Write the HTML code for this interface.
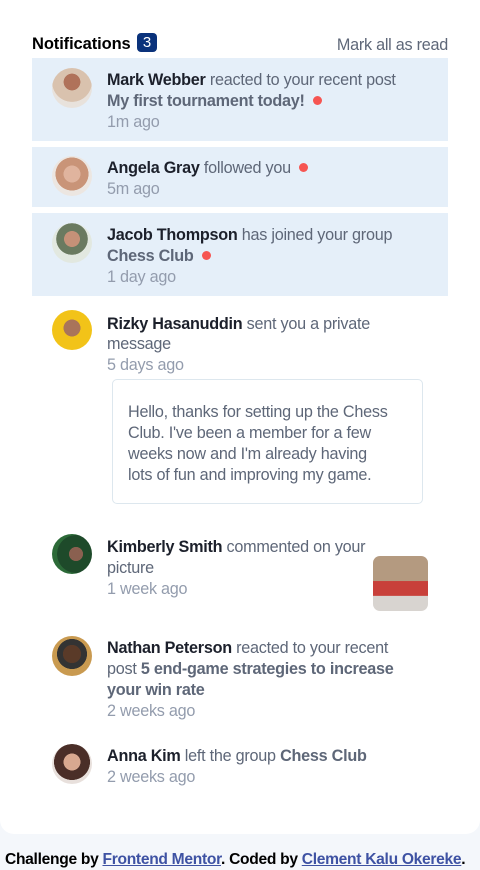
<!DOCTYPE html>
<html><head><meta charset="utf-8"><style>
*{margin:0;padding:0;box-sizing:border-box}
body{width:480px;height:868px;background:#f4f7fb;font-family:"Liberation Sans",sans-serif;position:relative;overflow:hidden;color:#5e6778}
.card{position:absolute;left:0;top:0;width:480px;height:834px;background:#fff;border-radius:0 0 14px 14px}
.a{position:absolute;white-space:nowrap;font-size:16.2px;letter-spacing:-0.25px;line-height:20px}
b{color:#1c202b;font-weight:bold}
b.g{color:#5e6778}
.t{color:#939cad}
.row{position:absolute;left:32px;width:416px;background:#e5eff9}
.av{position:absolute;left:52px;width:40px;height:40px;border-radius:50%}
.dot{display:inline-block;width:9px;height:9px;border-radius:50%;background:#f65552;margin-left:8px;vertical-align:1px}
</style></head><body>
<div class="card"></div>
<div class="a" style="left:32px;top:34px;font-weight:bold;color:#000;font-size:16.5px;letter-spacing:-0.1px">Notifications</div>
<div style="position:absolute;left:137px;top:33px;width:20px;height:19px;background:#0a327b;border-radius:4px;color:#fff;font-size:15px;text-align:center;line-height:19px">3</div>
<div class="a" style="right:32px;top:35px">Mark all as read</div>

<div class="row" style="top:58px;height:83px"></div>
<div class="row" style="top:147px;height:60px"></div>
<div class="row" style="top:213px;height:83px"></div>

<div class="av" style="top:68px;background:radial-gradient(circle at 50% 35%,#b0725a 0 25%,#d9c2ae 26% 60%,#e8e2dc 61%)"></div>
<div class="a" style="left:107px;top:70px"><b>Mark Webber</b> reacted to your recent post</div>
<div class="a" style="left:107px;top:91px"><b class="g">My first tournament today!</b><span class="dot"></span></div>
<div class="a t" style="left:107px;top:112px">1m ago</div>

<div class="av" style="top:156px;background:radial-gradient(circle at 50% 45%,#e0b49e 0 28%,#c99478 29% 55%,#ece6e1 56%)"></div>
<div class="a" style="left:107px;top:158px"><b>Angela Gray</b> followed you<span class="dot"></span></div>
<div class="a t" style="left:107px;top:179px">5m ago</div>

<div class="av" style="top:223px;background:radial-gradient(circle at 50% 40%,#c59178 0 25%,#6a7a60 26% 50%,#e2e8e0 51%)"></div>
<div class="a" style="left:107px;top:225px"><b>Jacob Thompson</b> has joined your group</div>
<div class="a" style="left:107px;top:246px"><b class="g">Chess Club</b><span class="dot"></span></div>
<div class="a t" style="left:107px;top:267px">1 day ago</div>

<div class="av" style="top:310px;background:radial-gradient(circle at 50% 45%,#a9745a 0 28%,#f2c318 29%)"></div>
<div class="a" style="left:107px;top:314px"><b>Rizky Hasanuddin</b> sent you a private</div>
<div class="a" style="left:107px;top:334px">message</div>
<div class="a t" style="left:107px;top:355px">5 days ago</div>
<div style="position:absolute;left:112px;top:379px;width:311px;height:125px;border:1px solid #dde7ee;border-radius:5px"></div>
<div class="a" style="left:128px;top:402px">Hello, thanks for setting up the Chess</div>
<div class="a" style="left:128px;top:423px">Club. I've been a member for a few</div>
<div class="a" style="left:128px;top:444px">weeks now and I'm already having</div>
<div class="a" style="left:128px;top:465px">lots of fun and improving my game.</div>

<div class="av" style="top:534px;background:radial-gradient(circle at 60% 50%,#8a6050 0 22%,#1e4a2a 23% 60%,#2c6a38 61%)"></div>
<div class="a" style="left:107px;top:537px"><b>Kimberly Smith</b> commented on your</div>
<div class="a" style="left:107px;top:558px">picture</div>
<div class="a t" style="left:107px;top:579px">1 week ago</div>
<div style="position:absolute;left:373px;top:556px;width:55px;height:55px;border-radius:7px;background:linear-gradient(#b49a80 0 45%,#c8403a 46% 72%,#d8d4d0 73%)"></div>

<div class="av" style="top:636px;background:radial-gradient(circle at 50% 45%,#5a3a28 0 30%,#333 31% 50%,#c99a50 51%)"></div>
<div class="a" style="left:107px;top:638px"><b>Nathan Peterson</b> reacted to your recent</div>
<div class="a" style="left:107px;top:659px">post <b class="g">5 end-game strategies to increase</b></div>
<div class="a" style="left:107px;top:680px"><b class="g">your win rate</b></div>
<div class="a t" style="left:107px;top:701px">2 weeks ago</div>

<div class="av" style="top:744px;background:radial-gradient(circle at 50% 45%,#d8a890 0 28%,#4a2e28 29% 60%,#e8e0dc 61%)"></div>
<div class="a" style="left:107px;top:746px"><b>Anna Kim</b> left the group <b class="g">Chess Club</b></div>
<div class="a t" style="left:107px;top:767px">2 weeks ago</div>

<div class="a" style="left:5px;top:850px;font-size:15.6px;font-weight:bold;color:#000;letter-spacing:-0.3px">Challenge by <span style="color:#3e52a3;text-decoration:underline">Frontend Mentor</span>. Coded by <span style="color:#3e52a3;text-decoration:underline">Clement Kalu Okereke</span>.</div>
</body></html>
